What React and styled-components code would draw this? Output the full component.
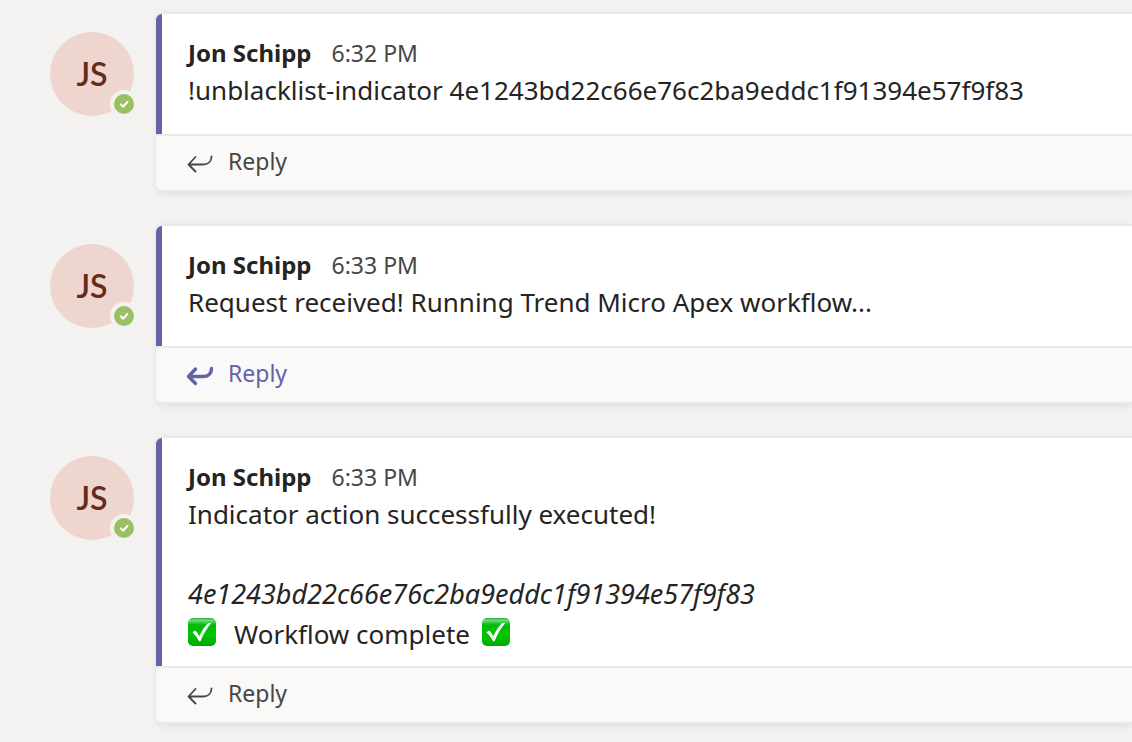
import React from "react";
import styled, { createGlobalStyle } from "styled-components";

const GlobalStyle = createGlobalStyle`
  * { box-sizing: border-box; }
  body {
    margin: 0;
    background: #f3f2f1;
    color: #252423;
    font-family: "Segoe UI", "Noto Sans", "Open Sans", sans-serif;
    overflow-x: hidden;
  }
`;

const Thread = styled.main`
  display: flex;
  flex-direction: column;
  gap: 32px;
  padding: 12px 0 18px 50px;
`;

const Message = styled.article`
  display: flex;
  align-items: flex-start;
  gap: 22px;
`;

const Avatar = styled.div`
  position: relative;
  flex: none;
  display: flex;
  align-items: center;
  justify-content: center;
  width: 84px;
  height: 84px;
  margin-top: 20px;
  border-radius: 50%;
  background: #eed6cf;
  color: #642c1c;
  font-family: "Segoe UI", Lato, sans-serif;
  font-size: 32px;
  font-weight: 600;
  line-height: 32px;
`;

const Presence = styled.span`
  position: absolute;
  right: -4px;
  bottom: -2px;
  display: flex;
  width: 28px;
  height: 28px;
  border: 4px solid #f3f2f1;
  border-radius: 50%;
  background: #9bc063;
`;

const Card = styled.section`
  flex: 1;
  min-width: 0;
  border: solid #ebe9e8;
  border-width: 2px 0;
  border-radius: 8px 0 0 8px;
  background: #faf9f8;
  box-shadow: 0 2px 6px rgba(0, 0, 0, 0.08);
`;

const Body = styled.div`
  min-height: 120px;
  padding: 24px 24px 12px 26px;
  border-left: 6px solid #6264a7;
  border-top-left-radius: 6px;
  background: #ffffff;
`;

const Header = styled.header`
  display: flex;
  align-items: baseline;
  gap: 20px;
  height: 32px;
`;

const Author = styled.h2`
  margin: 0;
  font-size: 24px;
  font-weight: 700;
  line-height: 30px;
`;

const Time = styled.time`
  color: #484644;
  font-size: 23px;
  line-height: 30px;
`;

const Text = styled.p`
  min-height: 40px;
  margin: 0;
  font-size: ${(p) => (p.$italic ? "27px" : "26px")};
  font-style: ${(p) => (p.$italic ? "italic" : "normal")};
  line-height: 40px;
`;

const StatusLine = styled(Text)`
  display: flex;
  align-items: center;
  gap: 12px;
`;

const StatusText = styled.span`
  padding-left: 6px;
`;

const Emoji = styled.svg`
  flex: none;
  width: 28px;
  height: 28px;
  margin-bottom: 4px;
`;

const ReplyButton = styled.button`
  display: flex;
  align-items: center;
  gap: 14px;
  width: 100%;
  height: 56px;
  padding: 0 30px 4px;
  border: 0;
  border-top: 2px solid #ebe9e8;
  border-bottom-left-radius: 6px;
  background: #faf9f8;
  color: ${(p) => (p.$active ? "#6264a7" : "#484644")};
  font-family: inherit;
  font-size: 23px;
  line-height: 32px;
  cursor: pointer;
`;

const ArrowIcon = styled.svg`
  flex: none;
  width: 28px;
  height: 24px;
  margin-top: 6px;
`;

function ReplyArrow({ active }) {
  return (
    <ArrowIcon
      viewBox="0 0 28 24"
      fill="none"
      stroke="currentColor"
      strokeWidth={active ? 3.4 : 1.8}
      strokeLinecap="round"
      strokeLinejoin="round"
      aria-hidden="true"
    >
      <path d="M9.5 5 2.5 12.5 9.5 19.5M2.5 12.5H17C22 12.5 25.5 9.5 25.5 4.5" />
    </ArrowIcon>
  );
}

function CheckEmoji({ id }) {
  return (
    <Emoji viewBox="0 0 28 28" role="img" aria-label="Check mark">
      <defs>
        <linearGradient id={id} x1="0" y1="0" x2="0" y2="1">
          <stop offset="0" stopColor="#23ae35" />
          <stop offset="0.08" stopColor="#72dc7c" />
          <stop offset="0.18" stopColor="#32c63d" />
          <stop offset="0.25" stopColor="#00b90a" />
          <stop offset="0.6" stopColor="#00c800" />
          <stop offset="1" stopColor="#00a800" />
        </linearGradient>
      </defs>
      <rect width="28" height="28" rx="5" fill={`url(#${id})`} />
      <path d="M4.5 14.2 7.2 12.5Q9.5 14.5 11.3 18.2Q15 10 20.2 5H23.3Q16.5 13 12.5 23.3H11.2Q8.5 18 4.5 14.2Z" fill="#fff" />
    </Emoji>
  );
}

function Post({ time, active, children }) {
  return (
    <Message>
      <Avatar>
        JS
        <Presence>
          <svg width="20" height="20" viewBox="0 0 20 20" fill="none" role="img" aria-label="Available">
            <path d="M6.8 10.4 9.2 12.7 13.4 8" stroke="#fff" strokeWidth="2" strokeLinecap="round" strokeLinejoin="round" />
          </svg>
        </Presence>
      </Avatar>
      <Card>
        <Body>
          <Header>
            <Author>Jon Schipp</Author>
            <Time>{time}</Time>
          </Header>
          {children}
        </Body>
        <ReplyButton type="button" $active={active}>
          <ReplyArrow active={active} />
          Reply
        </ReplyButton>
      </Card>
    </Message>
  );
}

export default function App() {
  return (
    <>
      <GlobalStyle />
      <Thread>
        <Post time="6:32 PM">
          <Text>!unblacklist-indicator 4e1243bd22c66e76c2ba9eddc1f91394e57f9f83</Text>
        </Post>
        <Post time="6:33 PM" active>
          <Text>Request received! Running Trend Micro Apex workflow...</Text>
        </Post>
        <Post time="6:33 PM">
          <Text>Indicator action successfully executed!</Text>
          <Text />
          <Text $italic>4e1243bd22c66e76c2ba9eddc1f91394e57f9f83</Text>
          <StatusLine>
            <CheckEmoji id="check-start" />
            <StatusText>Workflow complete</StatusText>
            <CheckEmoji id="check-end" />
          </StatusLine>
        </Post>
      </Thread>
    </>
  );
}
